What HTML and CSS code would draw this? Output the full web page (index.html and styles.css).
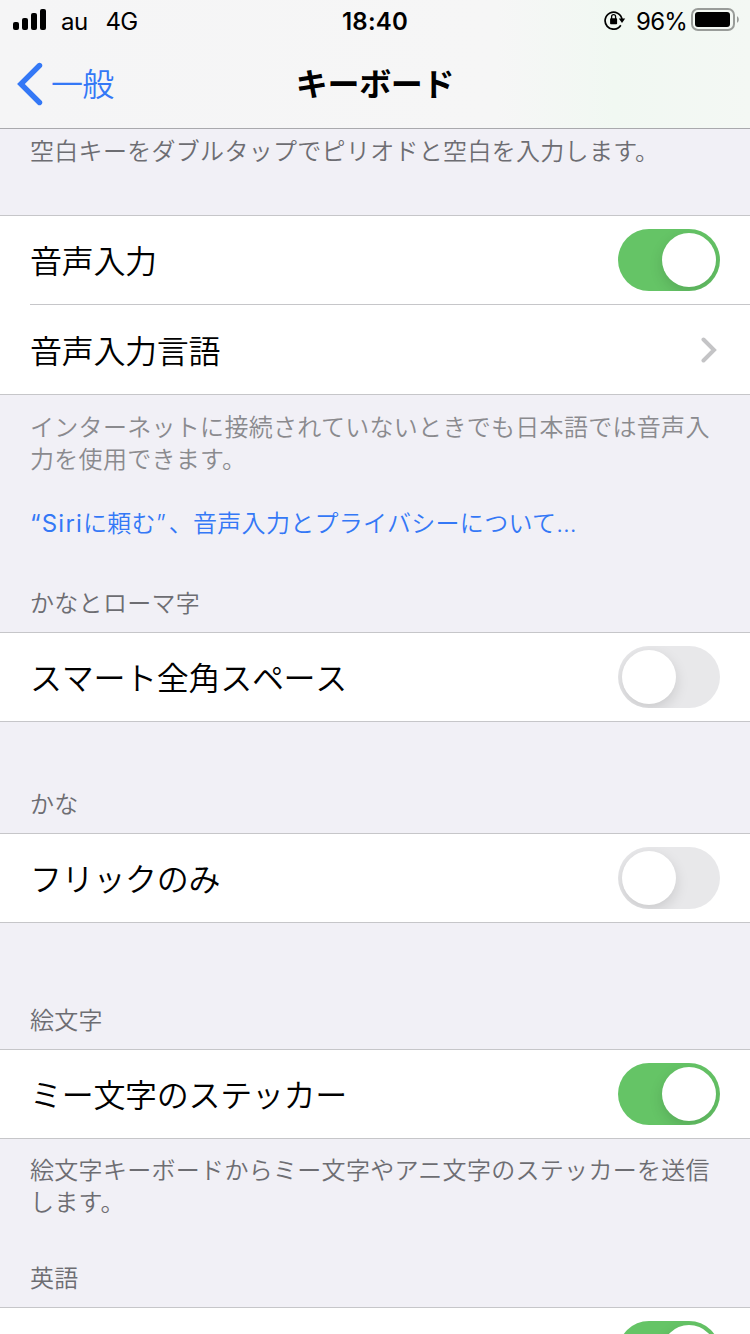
FILE: index.html
```
<!DOCTYPE html>
<html lang="ja">
<head>
<meta charset="UTF-8">
<meta name="viewport" content="width=device-width, initial-scale=1.0">
<title>キーボード</title>
<link rel="stylesheet" href="styles.css">
</head>
<body>
<div class="screen">
    <header class="header">
        <div class="status">
            <div class="status-left">
                <svg class="signal" width="34" height="22" viewBox="0 0 34 22">
                    <rect x="0" y="13" width="6" height="8" rx="2"/>
                    <rect x="9" y="9" width="6" height="12" rx="2"/>
                    <rect x="18" y="4" width="6" height="17" rx="2"/>
                    <rect x="27" y="0" width="6" height="21" rx="2"/>
                </svg>
                <span class="carrier">au</span>
                <span class="network">4G</span>
            </div>
            <div class="time">18:40</div>
            <div class="status-right">
                <svg class="lock" width="22" height="20" viewBox="0 0 22 20">
                    <path d="M16.8 15.2A8.5 8.5 0 1 1 18 9.4" fill="none" stroke="#000" stroke-width="1.7"/>
                    <path d="M14.8 8.6h6.4l-3.2 4.4z"/>
                    <rect x="6.1" y="8.2" width="7" height="6" rx=".8"/>
                    <path d="M7.6 9V6.7a2 2 0 0 1 4 0V9" fill="none" stroke="#000" stroke-width="1.3"/>
                </svg>
                <span class="percent">96%</span>
                <svg class="battery" width="49" height="24" viewBox="0 0 49 24">
                    <rect x="1" y="1" width="42" height="21" rx="6" fill="none" stroke="#999c99" stroke-width="2"/>
                    <rect x="4" y="4" width="35" height="15" rx="3"/>
                    <path d="M46 8.2c2.4.9 2.4 5.7 0 6.6z" fill="#999c99"/>
                </svg>
            </div>
        </div>
        <nav class="nav">
            <a class="back" href="#">
                <svg width="26" height="44" viewBox="0 0 26 44">
                    <path d="M22.5 3.5L3.9 22l18.6 18.5" fill="none" stroke="#3478f6" stroke-width="5.4" stroke-linecap="round" stroke-linejoin="miter"/>
                </svg>
                <span>一般</span>
            </a>
            <h1>キーボード</h1>
        </nav>
    </header>

    <div class="notes notes-first">
        <p>空白キーをダブルタップでピリオドと空白を入力します。</p>
    </div>

    <div class="group">
        <div class="row">
            <span>音声入力</span>
            <div class="switch on"><i></i></div>
        </div>
        <div class="row row-link">
            <span>音声入力言語</span>
            <svg class="chevron" width="16" height="26" viewBox="0 0 16 26">
                <path d="M2.5 2.5L13 13 2.5 23.5" fill="none" stroke="#c4c4c6" stroke-width="4" stroke-linecap="round"/>
            </svg>
        </div>
    </div>

    <div class="notes notes-siri">
        <p class="light">インターネットに接続されていないときでも日本語では音声入<br>力を使用できます。</p>
        <a class="privacy" href="#"><span class="latin">“Siri</span>に頼む<span class="quote">”</span>、音声入力とプライバシーについて…</a>
        <h2>かなとローマ字</h2>
    </div>

    <div class="group">
        <div class="row">
            <span>スマート全角スペース</span>
            <div class="switch"><i></i></div>
        </div>
    </div>

    <div class="notes notes-kana">
        <h2>かな</h2>
    </div>

    <div class="group">
        <div class="row">
            <span>フリックのみ</span>
            <div class="switch"><i></i></div>
        </div>
    </div>

    <div class="notes notes-emoji">
        <h2>絵文字</h2>
    </div>

    <div class="group">
        <div class="row">
            <span>ミー文字のステッカー</span>
            <div class="switch on"><i></i></div>
        </div>
    </div>

    <div class="notes notes-english">
        <p>絵文字キーボードからミー文字やアニ文字のステッカーを送信<br>します。</p>
        <h2>英語</h2>
    </div>

    <div class="group">
        <div class="row">
            <span></span>
            <div class="switch on"><i></i></div>
        </div>
    </div>
</div>
</body>
</html>
```
FILE: styles.css
```
* {
    box-sizing: border-box;
}

body {
    margin: 0;
    background-color: #f1f0f6;
    color: #000;
    font-family: Inter, "Noto Sans CJK JP", sans-serif;
    font-kerning: none;
}

.screen {
    width: 750px;
    height: 1334px;
    overflow: hidden;
}

.header {
    height: 129px;
    border-bottom: 1px solid #a9a9ad;
    background: linear-gradient(90deg, #f5f5f6 0%, #f6f6f6 66%, #f1f8f2 82%, #f4f8f4 100%);
}

/* Barre d'état */
.status {
    display: grid;
    grid-template-columns: 1fr auto 1fr;
    align-items: center;
    height: 40px;
    padding: 0 10px 0 13px;
    font-size: 24px;
}

.status span, .time {
    padding-top: 2px;
}

.status-left, .status-right {
    display: flex;
    align-items: center;
}

.status-right {
    justify-content: flex-end;
}

.carrier {
    margin-left: 14px;
    letter-spacing: -0.6px;
}

.network {
    margin-left: 18px;
    letter-spacing: -0.8px;
}

.time {
    margin-right: 3px;
    font-weight: 600;
    letter-spacing: 0.2px;
}

.percent {
    margin: 0 4px 0 10px;
    letter-spacing: -0.8px;
}

.nav {
    display: grid;
    grid-template-columns: 1fr auto 1fr;
    align-items: center;
    height: 88px;
    padding: 0 17px;
}

.back {
    display: flex;
    align-items: center;
    gap: 8px;
    color: #3478f6;
    font-size: 32px;
    font-weight: 350;
    letter-spacing: -0.8px;
    text-decoration: none;
}

.back span {
    padding-bottom: 4px;
}

h1 {
    margin: 0;
    padding-bottom: 5px;
    font-size: 32px;
    font-weight: 700;
    letter-spacing: -0.3px;
}

/* Textes entre les groupes */
.notes {
    display: flex;
    flex-direction: column;
    padding: 17px 30px 12px;
    color: #6d6d72;
    font-size: 24px;
    font-weight: 350;
    line-height: 32px;
    letter-spacing: 0.3px;
    white-space: nowrap;
    font-kerning: normal;
}

.notes p, .notes h2 {
    margin: 0;
}

.notes h2 {
    margin-top: auto;
    font-size: 24px;
    font-weight: 350;
}

.notes .light {
    color: #8a8a8e;
}

.notes-first {
    height: 86px;
    padding-top: 7px;
}

.notes-siri {
    height: 237px;
}

.notes-kana {
    height: 111px;
}

.notes-emoji {
    height: 126px;
}

.notes-english {
    height: 168px;
    padding-top: 16px;
}

.privacy {
    margin-top: 32px;
    color: #3478f6;
    text-decoration: none;
}

.latin {
    font-weight: 400;
    letter-spacing: 1.2px;
}

.quote {
    letter-spacing: 3px;
}

.group {
    border-top: 1px solid #c6c6c9;
    border-bottom: 1px solid #c6c6c9;
    background-color: white;
}

.row {
    display: flex;
    align-items: center;
    justify-content: space-between;
    height: 88px;
    padding-right: 30px;
    margin-left: 30px;
    font-size: 32px;
    font-weight: 350;
    letter-spacing: -0.3px;
}

.row span {
    padding-bottom: 3px;
}

.row-link {
    height: 90px;
    padding-right: 33px;
    border-top: 1px solid #c6c6c9;
}

.row-link span {
    padding-bottom: 1px;
}

.switch {
    display: flex;
    width: 102px;
    height: 62px;
    padding: 4px;
    border-radius: 31px;
    background-color: #e8e8ea;
    overflow: hidden;
}

.switch i {
    width: 54px;
    height: 54px;
    border-radius: 50%;
    background-color: white;
    box-shadow: 0 5px 14px rgba(0, 0, 0, 0.13);
}

.switch.on {
    justify-content: flex-end;
    background-color: #65c466;
}
```
